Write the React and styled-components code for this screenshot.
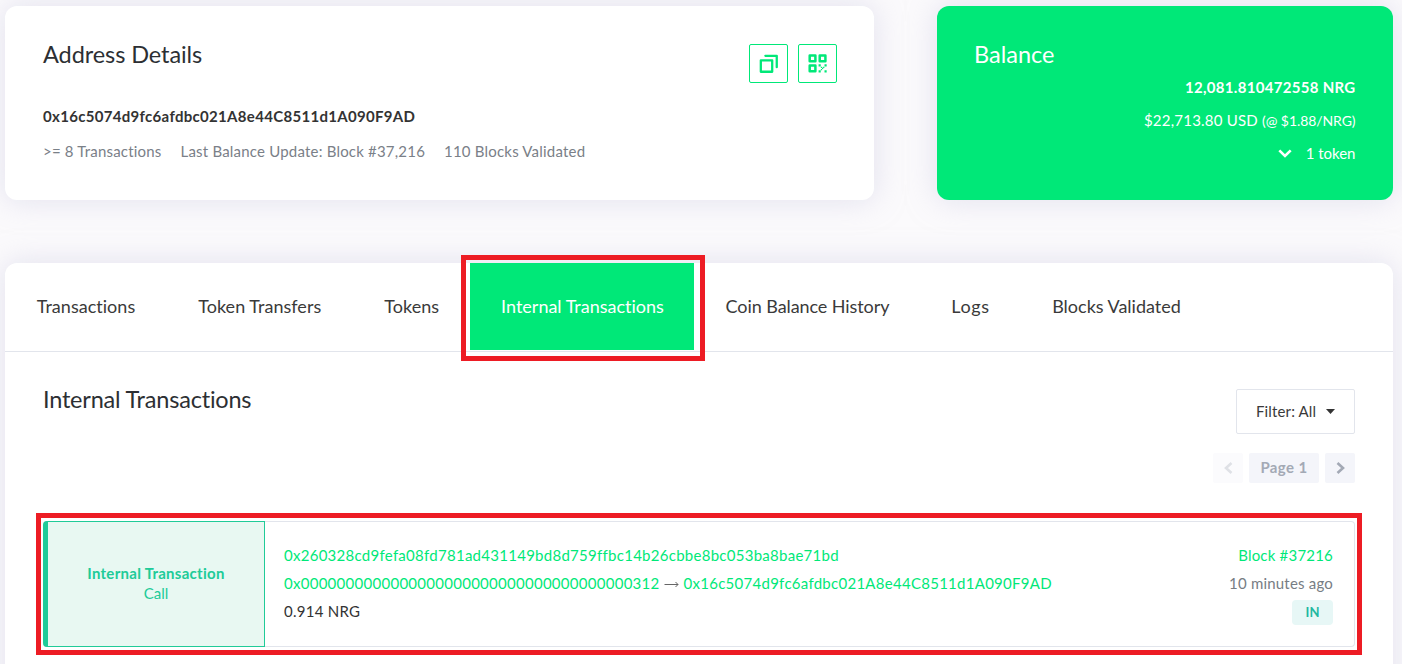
import React from "react";
import styled, { createGlobalStyle } from "styled-components";

const green = "#00e878";
const teal = "#20cb98";
const red = "#ed1c24";
const line = "#e2e5ec";

const GlobalStyle = createGlobalStyle`
  *, *::before, *::after { box-sizing: border-box; }
  body {
    margin: 0;
    background: #fbfafc;
    color: #3a3a3a;
    font-family: Lato, "Open Sans", sans-serif;
    font-size: 15px;
    line-height: 20px;
    font-variant-ligatures: none;
    overflow: hidden;
  }
  h2, p { margin: 0; }
`;

const Page = styled.main`
  height: 664px;
  padding: 6px 9px 0 5px;
  overflow: hidden;
`;

const Summary = styled.div`
  display: flex;
  justify-content: space-between;
  margin-bottom: 63px;
`;

const Card = styled.section`
  background: ${(p) => (p.$filled ? green : "#fff")};
  color: ${(p) => (p.$filled ? "#fff" : "#333")};
  border-radius: 12px;
  box-shadow: 0 0 30px rgba(202, 199, 226, 0.5);
`;

const DetailsCard = styled(Card)`
  width: 869px;
  height: 194px;
  padding: 33px 37px 0 38px;
`;

const BalanceCard = styled(Card)`
  width: 456px;
  height: 194px;
  padding: 33px 37.5px 0 37px;
  display: flex;
  flex-direction: column;
`;

const CardHead = styled.div`
  display: flex;
  justify-content: space-between;
  align-items: flex-start;
`;

const Title = styled.h2`
  font-size: 23.5px;
  font-weight: 400;
  line-height: 30px;
  letter-spacing: ${(p) => p.$track || 0}px;
  color: ${(p) => (p.$light ? "#fff" : "#2c2f33")};
`;

const Actions = styled.div`
  display: flex;
  gap: 10px;
  padding-top: 5px;
`;

const IconButton = styled.button`
  width: 39px;
  height: 39px;
  padding: 0;
  border: 1px solid ${green};
  border-radius: 2px;
  background: #fff;
  color: ${green};
  svg { display: block; }
`;

const Hash = styled.p`
  margin-top: 23px;
  font-weight: 700;
  letter-spacing: 0.31px;
`;

const Facts = styled.div`
  display: flex;
  gap: 19px;
  margin-top: 15px;
  color: #7a8088;
  letter-spacing: 0.2px;
`;

const Amount = styled.p`
  margin-top: ${(p) => p.$gap}px;
  text-align: right;
  font-weight: ${(p) => (p.$bold ? 700 : 400)};
  letter-spacing: ${(p) => p.$track}px;
  small { font-size: 14px; letter-spacing: -0.08px; }
`;

const TokenLine = styled.div`
  display: flex;
  justify-content: flex-end;
  align-items: center;
  gap: 14px;
  margin-top: 12px;
`;

const Panel = styled(Card)`
  height: 460px;
`;

const TabBar = styled.nav`
  display: flex;
  height: 89px;
  border-bottom: 1px solid ${line};
`;

const Tab = styled.div`
  position: relative;
  width: ${(p) => p.$width}px;
  height: 87px;
  display: flex;
  align-items: center;
  justify-content: center;
  padding: 0 0 2px 1px;
  font-size: 18px;
  letter-spacing: ${(p) => p.$track}px;
  background: ${(p) => (p.$active ? green : "transparent")};
  color: ${(p) => (p.$active ? "#fff" : "#3a3a3a")};
`;

const Highlight = styled.span`
  position: absolute;
  inset: ${(p) => p.$inset};
  border: 5px solid ${red};
  pointer-events: none;
`;

const PanelBody = styled.div`
  padding: 32px 38px 0;
`;

const Controls = styled.div`
  display: flex;
  flex-direction: column;
  align-items: flex-end;
  gap: 19px;
  padding-top: 5px;
`;

const Filter = styled.button`
  display: flex;
  align-items: center;
  gap: 10px;
  width: 119px;
  height: 45px;
  padding: 0 0 2px 19px;
  border: 1px solid ${line};
  border-radius: 2px;
  background: #fff;
  color: #3a3a3a;
  font: inherit;
  letter-spacing: 0.15px;
  svg { margin-top: 2px; }
`;

const Pager = styled.div`
  display: flex;
  gap: 6px;
`;

const PageCell = styled.div`
  display: flex;
  align-items: center;
  justify-content: center;
  width: ${(p) => (p.$label ? 70 : 30)}px;
  height: 30px;
  padding-bottom: ${(p) => (p.$label ? 2 : 0)}px;
  border-radius: 2px;
  background: ${(p) => (p.$muted ? "#fbfbfd" : "#f4f5fa")};
  color: ${(p) => (p.$muted ? "#dfe1e6" : "#a3a9b5")};
  font-weight: 700;
  letter-spacing: 0.4px;
`;

const Tile = styled.article`
  position: relative;
  display: flex;
  height: 126px;
  margin-top: 38px;
  border: 1px solid ${line};
  border-left: 0;
  border-radius: 4px;
`;

const TileType = styled.div`
  display: flex;
  flex-direction: column;
  align-items: center;
  justify-content: center;
  width: 222px;
  margin: -1px 0;
  padding-bottom: 2px;
  background: #e8f8f2;
  color: ${teal};
  border: 1px solid ${teal};
  border-left: 5px solid ${teal};
  border-radius: 4px 0 0 4px;
  strong { letter-spacing: 0.28px; }
`;

const TileMain = styled.div`
  flex: 1;
  padding: 19px 0 0 19px;
  line-height: 28px;
  letter-spacing: 0.27px;
`;

const TileMeta = styled.div`
  display: flex;
  flex-direction: column;
  align-items: flex-end;
  padding: 19px 21px 0 0;
  line-height: 28px;
  letter-spacing: 0.2px;
  color: #777d84;
`;

const Link = styled.a`
  color: ${green};
`;

const Route = styled.div`
  display: flex;
  align-items: center;
`;

const Badge = styled.span`
  width: 41px;
  height: 25px;
  margin-top: 3px;
  border-radius: 4px;
  background: #e7f7f6;
  color: #22b8a0;
  font-size: 13px;
  font-weight: 700;
  line-height: 25px;
  letter-spacing: 0;
  text-align: center;
`;

const CopyIcon = () => (
  <svg width="37" height="37" viewBox="0 0 32.5 32.5" fill="currentColor">
    <path d="M23.5 20.5a1 1 0 0 1-1-1v-9h-9a1 1 0 0 1 0-2h10a1 1 0 0 1 1 1v10a1 1 0 0 1-1 1zm-3-7v10a1 1 0 0 1-1 1h-10a1 1 0 0 1-1-1v-10a1 1 0 0 1 1-1h10a1 1 0 0 1 1 1zm-2 1h-8v8h8v-8z" />
  </svg>
);

const QrIcon = () => (
  <svg width="37" height="37" viewBox="0 0 32.5 32.5" fill="currentColor">
    <g fill="none" stroke="currentColor" strokeWidth="2.2" strokeLinejoin="round">
      <path d="M9.4 9.2h5v5h-5zM18.2 9.2h5v5h-5zM9.4 18h5v5h-5z" />
    </g>
    <path d="M17.2 17h1.9v1.9h-1.9zM22.4 17h1.9v1.9h-1.9zM17.2 22.2h1.9v1.9h-1.9zM22.4 22.2h1.9v1.9h-1.9zM19.2 19h1.1v1.1h-1.1zM21.2 19h1.1v1.1h-1.1zM20.2 20h1.1v1.1h-1.1zM19.2 21h1.1v1.1h-1.1z" />
  </svg>
);

const Chevron = ({ d, w, h }) => (
  <svg width={w} height={h} viewBox={`0 0 ${w} ${h}`} fill="none" stroke="currentColor" strokeWidth="2.6">
    <path d={d} />
  </svg>
);

const Arrow = styled.svg`
  margin: 2px 5px 0 4px;
`;

const tabs = [
  ["Transactions", 161, 0.02],
  ["Token Transfers", 186.5, 0.03],
  ["Tokens", 117.5, 0.05],
  ["Internal Transactions", 224, 0],
  ["Coin Balance History", 226, -0.08],
  ["Logs", 100, 0.6],
  ["Blocks Validated", 192, 0],
];

export default function App() {
  return (
    <>
      <GlobalStyle />
      <Page>
        <Summary>
          <DetailsCard>
            <CardHead>
              <Title $track={-0.08}>Address Details</Title>
              <Actions>
                <IconButton aria-label="Copy address"><CopyIcon /></IconButton>
                <IconButton aria-label="QR code"><QrIcon /></IconButton>
              </Actions>
            </CardHead>
            <Hash>0x16c5074d9fc6afdbc021A8e44C8511d1A090F9AD</Hash>
            <Facts>
              <span>&gt;= 8 Transactions</span>
              <span>Last Balance Update: Block #37,216</span>
              <span>110 Blocks Validated</span>
            </Facts>
          </DetailsCard>
          <BalanceCard $filled>
            <Title $light>Balance</Title>
            <Amount $bold $gap={8} $track={0.3}>12,081.810472558 NRG</Amount>
            <Amount $gap={13} $track={0.22}>
              $22,713.80 USD <small>(@ $1.88/NRG)</small>
            </Amount>
            <TokenLine>
              <Chevron w={14} h={9} d="M1.3 1.3L7 7L12.7 1.3" />
              <span>1 token</span>
            </TokenLine>
          </BalanceCard>
        </Summary>
        <Panel>
          <TabBar>
            {tabs.map(([label, width, track]) => {
              const active = label === "Internal Transactions";
              return (
                <Tab key={label} $width={width} $track={track} $active={active}>
                  {label}
                  {active && <Highlight $inset="-8px -11px -11px -9px" />}
                </Tab>
              );
            })}
          </TabBar>
          <PanelBody>
            <CardHead>
              <Title $track={-0.2}>Internal Transactions</Title>
              <Controls>
                <Filter>
                  Filter: All
                  <svg width="9" height="5" viewBox="0 0 9 5"><path d="M0 0h9L4.5 5z" fill="#333" /></svg>
                </Filter>
                <Pager>
                  <PageCell $muted><Chevron w={9} h={12} d="M7.5 1L2 6L7.5 11" /></PageCell>
                  <PageCell $label>Page 1</PageCell>
                  <PageCell><Chevron w={9} h={12} d="M1.5 1L7 6L1.5 11" /></PageCell>
                </Pager>
              </Controls>
            </CardHead>
            <Tile>
              <TileType>
                <strong>Internal Transaction</strong>
                <span>Call</span>
              </TileType>
              <TileMain>
                <Link>0x260328cd9fefa08fd781ad431149bd8d759ffbc14b26cbbe8bc053ba8bae71bd</Link>
                <Route>
                  <Link>0x0000000000000000000000000000000000000312</Link>
                  <Arrow width="15" height="7" viewBox="0 0 15 7" fill="none" stroke="#666" strokeWidth="1">
                    <path d="M0.5 3.5H14M11.5 1L14 3.5L11.5 6" />
                  </Arrow>
                  <Link>0x16c5074d9fc6afdbc021A8e44C8511d1A090F9AD</Link>
                </Route>
                <div>0.914 NRG</div>
              </TileMain>
              <TileMeta>
                <Link>Block #37216</Link>
                <span>10 minutes ago</span>
                <Badge>IN</Badge>
              </TileMeta>
              <Highlight $inset="-9px -8px -9px -7px" />
            </Tile>
          </PanelBody>
        </Panel>
      </Page>
    </>
  );
}
